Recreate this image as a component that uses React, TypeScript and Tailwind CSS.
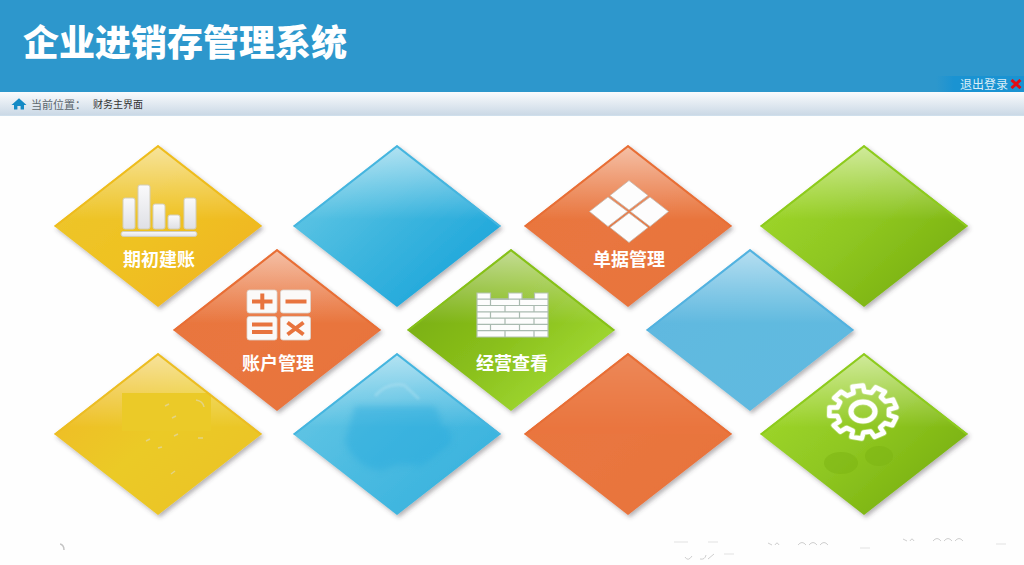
import { useId } from "react";
import type { ReactNode } from "react";

type Tone = "yellow" | "blue" | "aqua" | "orange" | "green" | "lime" | "sky" | "gold";

const tones: Record<Tone, { from: string; mid: string; to: string; edge: string }> = {
  yellow: { from: "#edc52b", mid: "#efc222", to: "#f0b720", edge: "#eebc1c" },
  gold: { from: "#efbd27", mid: "#ebca28", to: "#ebc427", edge: "#ecbd22" },
  blue: { from: "#5fc5e4", mid: "#3cb5de", to: "#1fa7db", edge: "#45b5df" },
  aqua: { from: "#62c5e4", mid: "#4bbbe1", to: "#3ab3de", edge: "#45b5df" },
  orange: { from: "#e9763e", mid: "#e9763f", to: "#e8733b", edge: "#e86e35" },
  green: { from: "#9ed62b", mid: "#8fc722", to: "#7bb210", edge: "#8dcb1c" },
  lime: { from: "#79ae12", mid: "#89bf1b", to: "#a1d934", edge: "#86c117" },
  sky: { from: "#5fb8e0", mid: "#61badf", to: "#61b9e0", edge: "#52b2e0" },
};

function DiamondShape({ tone, children }: { tone: Tone; children?: ReactNode }) {
  const id = useId();
  const c = tones[tone];
  const shape = "M104 0 208 81 104 162 0 81Z";
  return (
    <svg viewBox="0 0 208 163" className="absolute inset-0 size-full overflow-visible" aria-hidden="true">
      <defs>
        <linearGradient id={`${id}b`} x1="0.1" y1="0.25" x2="0.8" y2="0.85">
          <stop offset="0" stopColor={c.from} />
          <stop offset="0.5" stopColor={c.mid} />
          <stop offset="1" stopColor={c.to} />
        </linearGradient>
        <linearGradient id={`${id}h`} x1="0" y1="0" x2="0" y2="1">
          <stop offset="0" stopColor="#fff" stopOpacity="0.55" />
          <stop offset="0.25" stopColor="#fff" stopOpacity="0.24" />
          <stop offset="0.46" stopColor="#fff" stopOpacity="0" />
        </linearGradient>
        <clipPath id={`${id}c`}>
          <path d={shape} />
        </clipPath>
        <filter id={`${id}s`} x="-10%" y="-10%" width="120%" height="120%">
          <feDropShadow dx="2" dy="2.500" stdDeviation="2.200" floodColor="#403840" floodOpacity="0.38" />
        </filter>
      </defs>
      <path d={shape} fill={`url(#${id}b)`} filter={`url(#${id}s)`} />
      <g clipPath={`url(#${id}c)`}>
        <path d={shape} fill={`url(#${id}h)`} />
        {children}
        <path d="M0 81 104 0 208 81" fill="none" stroke={c.edge} strokeWidth="4" />
      </g>
    </svg>
  );
}

function BarsIcon() {
  const id = useId();
  return (
    <svg width="78" height="54" viewBox="0 0 78 54" aria-hidden="true">
      <defs>
        <linearGradient id={id} x1="0" y1="0" x2="0" y2="1">
          <stop offset="0" stopColor="#fafafb" />
          <stop offset="1" stopColor="#dfe0e5" />
        </linearGradient>
      </defs>
      <g fill={`url(#${id})`} stroke="#d2cdb9" strokeWidth="1">
        <rect x="3" y="14" width="12" height="31" rx="2" />
        <rect x="18" y="1" width="12" height="44" rx="2" />
        <rect x="33" y="20" width="12" height="25" rx="2" />
        <rect x="48" y="31" width="12" height="14" rx="2" />
        <rect x="64" y="14" width="12" height="31" rx="2" />
        <rect x="1" y="47.500" width="76" height="5" rx="2.500" />
      </g>
    </svg>
  );
}

function PanesIcon() {
  return (
    <svg width="80" height="63" viewBox="0 0 80 63" aria-hidden="true">
      <g fill="#fdfdfd" stroke="#c3b9b0" strokeWidth="0.8">
        <path d="M40 .5 59 15.500 40 30 21 15.500Z" />
        <path d="M19 17 38.500 31.500 19 46.500 .5 31.500Z" />
        <path d="M61 17 79.500 31.500 61 46.500 41.500 31.500Z" />
        <path d="M40 33 59 47.500 40 62.500 21 47.500Z" />
      </g>
    </svg>
  );
}

function CalculatorIcon() {
  return (
    <svg width="65" height="52" viewBox="0 0 65 52" aria-hidden="true">
      <g fill="#fbfaf9" stroke="#dcd3cd" strokeWidth="0.8">
        <rect x="1" y="1" width="30" height="23" rx="2.500" />
        <rect x="34.500" y="1" width="30" height="23" rx="2.500" />
        <rect x="1" y="27.500" width="30" height="23.500" rx="2.500" />
        <rect x="34.500" y="27.500" width="30" height="23.500" rx="2.500" />
      </g>
      <g fill="none" stroke="#e8743e" strokeWidth="4">
        <path d="M6 12.500H26.500M16.300 4.500V20.500" />
        <path d="M39.500 12.500H60.500" />
        <path d="M6 35.500H26.500M6 43H26.500" />
        <path d="M41.500 33.500 57.500 45.500M57.500 33.500 41.500 45.500" />
      </g>
    </svg>
  );
}

function WallIcon() {
  return (
    <svg width="73" height="46" viewBox="0 0 73 46" aria-hidden="true">
      <path
        d="M1 1H14.500V7.200H32.500V1H46V7.200H58.500V1H72V45H1Z"
        fill="#fdfdfd"
        stroke="#b4c4b0"
        strokeWidth="1.200"
      />
      <path
        d="M1 7.200H72M1 13.500H72M1 19.800H72M1 26.100H72M1 32.400H72M1 38.700H72M14.500 7.200V13.500M43.500 7.200V13.500M29 13.500V19.800M58 13.500V19.800M14.500 19.800V26.100M43.500 19.800V26.100M29 26.100V32.400M58 26.100V32.400M14.500 32.400V38.700M43.500 32.400V38.700M29 38.700V45M58 38.700V45"
        fill="none"
        stroke="#a9bab0"
        strokeWidth="1.200"
      />
    </svg>
  );
}

const gearOutline = Array.from({ length: 9 }, (_, i) => -99 + i * 40)
  .flatMap((tooth) =>
    [
      [-12, 0.77],
      [-9, 1],
      [9, 1],
      [12, 0.77],
    ].map(([offset, radius]) => {
      const angle = ((tooth + offset) * Math.PI) / 180;
      return `${(35 + 34 * radius * Math.cos(angle)).toFixed(1)},${(29 + 26.5 * radius * Math.sin(angle)).toFixed(1)}`;
    }),
  )
  .join(" ");

function GearIcon() {
  return (
    <svg width="72" height="58" viewBox="0 0 72 58" aria-hidden="true" className="overflow-visible">
      <g fill="none" stroke="#fff" strokeLinejoin="round">
        <polygon points={gearOutline} strokeWidth="6" strokeOpacity="0.3" />
        <polygon points={gearOutline} strokeWidth="4.500" />
        <ellipse cx="35" cy="28.500" rx="12" ry="9.500" strokeWidth="6.500" strokeOpacity="0.3" />
        <ellipse cx="35" cy="28.500" rx="12" ry="9.500" strokeWidth="5" />
      </g>
    </svg>
  );
}

const tile = "relative col-span-2 row-span-2 h-[163px] w-[208px] self-start justify-self-start";

function MenuTile({ tone, place, label, icon }: { tone: Tone; place: string; label: string; icon: ReactNode }) {
  return (
    <button type="button" className={`${tile} ${place} flex cursor-pointer flex-col items-center pt-[34px] pl-0.5`}>
      <DiamondShape tone={tone} />
      <span className="relative flex h-16 items-center">{icon}</span>
      <span className="relative mt-[3px] text-lg leading-6 font-bold text-white">{label}</span>
    </button>
  );
}

function BlankTile({ tone, place, children }: { tone: Tone; place: string; children?: ReactNode }) {
  return (
    <div className={`${tile} ${place}`}>
      <DiamondShape tone={tone}>{children}</DiamondShape>
    </div>
  );
}

export default function App() {
  return (
    <div className="relative min-h-screen bg-[#fefefe] font-['Noto_Sans_CJK_SC',sans-serif]">
      <header className="flex h-[92px] items-start justify-between bg-[#2d97cc]">
        <h1 className="pt-3.5 pl-[23px] text-4xl leading-[52px] font-black text-white">企业进销存管理系统</h1>
        <button
          type="button"
          className="flex h-4 cursor-pointer items-center gap-0.5 self-end bg-linear-to-r from-[#2d97cc] to-[#1a93d2] to-20% pr-0.5 pl-6 text-xs leading-4 text-[#d9eef8]"
        >
          退出登录
          <svg width="12" height="10" viewBox="0 0 12 10" aria-hidden="true">
            <path d="M1.500 1 10.500 9M10.500 1 1.500 9" stroke="#e30b13" strokeWidth="3" />
          </svg>
        </button>
      </header>

      <nav
        aria-label="当前位置"
        className="flex h-6 items-center border-b border-[#cfdfec] bg-linear-to-b from-[#fafbfd] to-[#cbd9e6] pl-[11px] text-[#333]"
      >
        <svg width="16" height="12" viewBox="0 0 16 12" aria-hidden="true">
          <path d="M8 .3 15.500 7H13V11.500H9.600V8H6.400V11.500H3V7H.5Z" fill="#148ac5" />
        </svg>
        <span className="ml-1 text-[11px] leading-4 text-[#5c666d]">当前位置：</span>
        <span className="ml-[7px] text-[10px] leading-4">财务主界面</span>
      </nav>

      <main className="grid auto-rows-[104px] grid-cols-[minmax(0,119fr)_minmax(0,120fr)_minmax(0,114fr)_minmax(0,117fr)_minmax(0,122fr)_minmax(0,114fr)_minmax(0,94fr)_minmax(0,114fr)] pt-[29px] pr-14 pl-[54px]">
        <MenuTile tone="yellow" place="col-start-1 row-start-1" label="期初建账" icon={<BarsIcon />} />
        <BlankTile tone="blue" place="col-start-3 row-start-1" />
        <MenuTile tone="orange" place="col-start-5 row-start-1" label="单据管理" icon={<PanesIcon />} />
        <BlankTile tone="green" place="col-start-7 row-start-1" />

        <MenuTile tone="orange" place="col-start-2 row-start-2" label="账户管理" icon={<CalculatorIcon />} />
        <MenuTile tone="lime" place="col-start-4 row-start-2" label="经营查看" icon={<WallIcon />} />
        <BlankTile tone="sky" place="col-start-6 row-start-2" />

        <BlankTile tone="gold" place="col-start-1 row-start-3">
          <path d="M68 40H157V78H68Z" fill="#ebca28" />
          <path
            d="M111 53 115 51M118 65 122 63M92 88 96 86M104 95 108 94M120 83 124 81M117 121 121 118M144 85H149M142 47Q149 48 150 54"
            fill="none"
            stroke="#e3d383"
            strokeWidth="1.500"
          />
        </BlankTile>
        <BlankTile tone="aqua" place="col-start-3 row-start-3">
          <path
            d="M62 53H140Q148 58 148 72L158 78V90L146 100Q138 107 126 113Q105 108 88 118Q60 112 52 88Z"
            fill="#22a8dc"
            fillOpacity="0.4"
            className="blur-[3px]"
          />
          <path d="M82 43Q94 29 111 32L126 46" fill="none" stroke="#b7e3f3" strokeOpacity="0.4" strokeWidth="3" className="blur-[1px]" />
        </BlankTile>
        <BlankTile tone="orange" place="col-start-5 row-start-3">
          <path d="M104 0 208 81H0Z" fill="#e9763f" fillOpacity="0.75" />
        </BlankTile>
        <button
          type="button"
          aria-label="设置"
          className={`${tile} col-start-7 row-start-3 flex cursor-pointer flex-col items-center pt-[30px]`}
        >
          <DiamondShape tone="green">
            <ellipse cx="81" cy="110" rx="17" ry="11" fill="#7bb312" fillOpacity="0.5" />
            <ellipse cx="119" cy="103" rx="14" ry="10" fill="#7bb312" fillOpacity="0.5" />
          </DiamondShape>
          <span className="relative">
            <GearIcon />
          </span>
        </button>
      </main>

      <svg
        width="360"
        height="28"
        viewBox="0 0 360 28"
        aria-hidden="true"
        className="pointer-events-none absolute right-0 bottom-0"
      >
        <path
          d="M104 6 108 8M111 8Q113 4 115 8M134 8Q138 3 142 8M145 8Q149 3 153 8M156 8Q160 3 164 8M239 2 243 4M246 4Q248 0 250 4M269 4Q273 -1 277 4M280 4Q284 -1 288 4M291 4Q295 -1 299 4M21 20Q24 25 28 19M36 22Q41 23 42 18M44 22 50 17"
          fill="none"
          stroke="#cfcfcf"
          strokeWidth="1"
        />
        <path d="M10 5H24M44 5H54M60 17H70M196 11H206M332 7H342" stroke="#f0f0f0" strokeWidth="2" />
      </svg>
      <svg
        width="6"
        height="8"
        viewBox="0 0 6 8"
        aria-hidden="true"
        className="pointer-events-none absolute bottom-3.5 left-[60px]"
      >
        <path d="M0 1Q4 2 4 7" fill="none" stroke="#c4c4c4" strokeWidth="1.500" />
      </svg>
    </div>
  );
}
